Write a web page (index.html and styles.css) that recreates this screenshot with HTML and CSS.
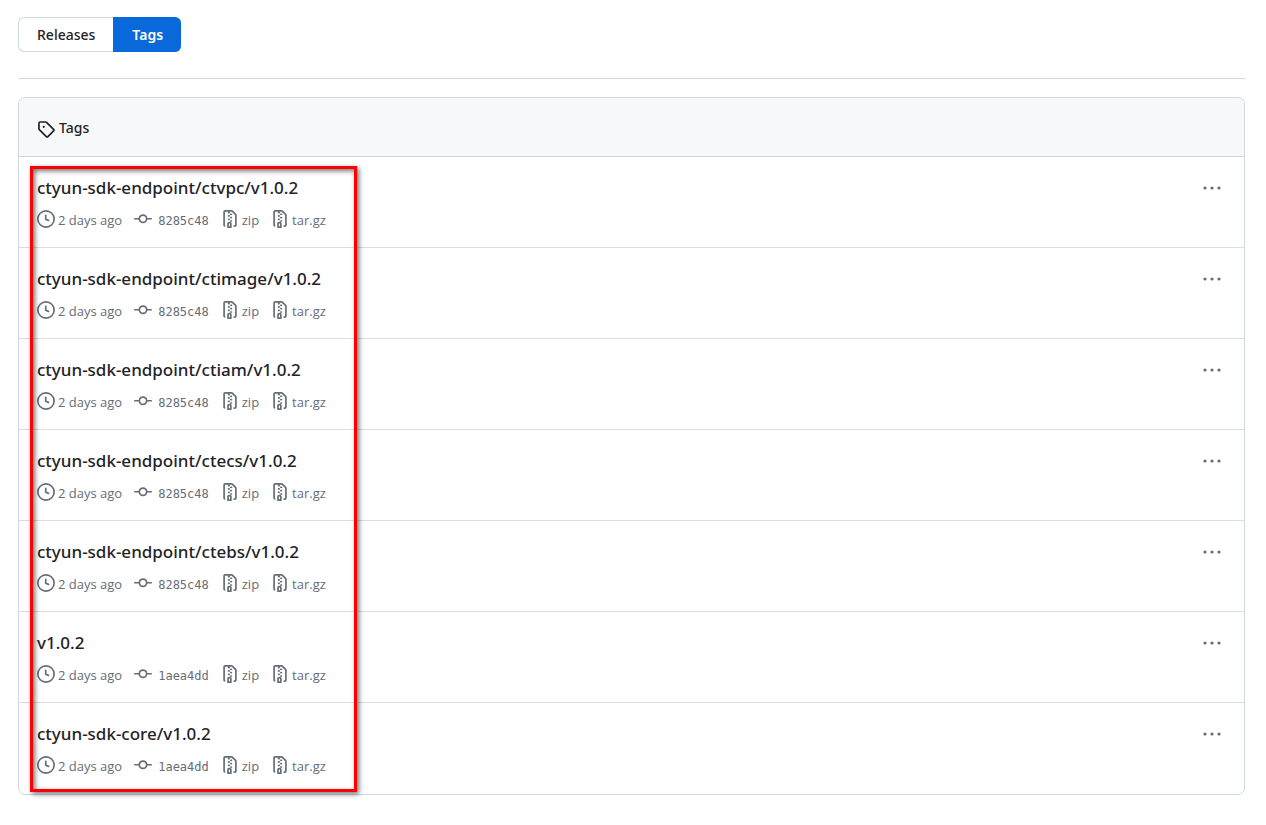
FILE: index.html
```html
<!DOCTYPE html>
<html lang="en">
<head>
  <meta charset="UTF-8" />
  <meta name="viewport" content="width=device-width, initial-scale=1.0"/>
  <title>Tags</title>
  <link rel="stylesheet" href="styles.css">
</head>
<body>
  <!-- Icon sprite -->
  <svg class="sprite" aria-hidden="true">
    <symbol id="icon-tag" viewBox="0 0 16 16">
      <path d="M1 7.775V2.75C1 1.784 1.784 1 2.75 1h5.025c.464 0 .91.184 1.238.513l6.25 6.25a1.75 1.75 0 0 1 0 2.474l-5.026 5.026a1.75 1.75 0 0 1-2.474 0l-6.25-6.25A1.752 1.752 0 0 1 1 7.775Zm1.5 0c0 .066.026.13.073.177l6.25 6.25a.25.25 0 0 0 .354 0l5.025-5.025a.25.25 0 0 0 0-.354l-6.25-6.25a.25.25 0 0 0-.177-.073H2.75a.25.25 0 0 0-.25.25ZM6 5a1 1 0 1 1 0 2 1 1 0 0 1 0-2Z"/>
    </symbol>
    <symbol id="icon-clock" viewBox="0 0 16 16">
      <path d="M8 0a8 8 0 1 1 0 16A8 8 0 0 1 8 0ZM1.5 8a6.5 6.5 0 1 0 13 0 6.5 6.5 0 0 0-13 0Zm7-3.25v2.992l2.028.812a.75.75 0 0 1-.557 1.392l-2.5-1A.751.751 0 0 1 7 8.25v-3.5a.75.75 0 0 1 1.5 0Z"/>
    </symbol>
    <symbol id="icon-commit" viewBox="0 0 16 16">
      <path d="M11.93 8.5a4.002 4.002 0 0 1-7.86 0H.75a.75.75 0 0 1 0-1.5h3.32a4.002 4.002 0 0 1 7.86 0h3.32a.75.75 0 0 1 0 1.5Zm-1.43-.75a2.5 2.5 0 1 0-5 0 2.5 2.5 0 0 0 5 0Z"/>
    </symbol>
    <symbol id="icon-zip" viewBox="0 0 16 16">
      <path d="M3.5 1.75v11.5c0 .09.048.173.126.217a.75.75 0 0 1-.752 1.298A1.748 1.748 0 0 1 2 13.25V1.75C2 .784 2.784 0 3.75 0h5.586c.464 0 .909.185 1.237.513l2.914 2.914c.329.328.513.773.513 1.237v8.586A1.75 1.75 0 0 1 12.25 15h-.5a.75.75 0 0 1 0-1.5h.5a.25.25 0 0 0 .25-.25V4.664a.25.25 0 0 0-.073-.177L9.513 1.573a.25.25 0 0 0-.177-.073H7.25a.75.75 0 0 1 0 1.5h-.5a.75.75 0 0 1 0-1.5h-3a.25.25 0 0 0-.25.25Zm3.75 8.75h.5c.966 0 1.75.784 1.75 1.75v3a.75.75 0 0 1-.75.75h-2.5a.75.75 0 0 1-.75-.75v-3c0-.966.784-1.75 1.75-1.75ZM6 5.25a.75.75 0 0 1 .75-.75h.5a.75.75 0 0 1 0 1.5h-.5A.75.75 0 0 1 6 5.25Zm.75 2.25h.5a.75.75 0 0 1 0 1.5h-.5a.75.75 0 0 1 0-1.5ZM8 6.75A.75.75 0 0 1 8.75 6h.5a.75.75 0 0 1 0 1.5h-.5A.75.75 0 0 1 8 6.75ZM8.75 3h.5a.75.75 0 0 1 0 1.5h-.5a.75.75 0 0 1 0-1.5ZM8 9.75A.75.75 0 0 1 8.75 9h.5a.75.75 0 0 1 0 1.5h-.5A.75.75 0 0 1 8 9.75Zm-1 2.5v2.25h1v-2.25a.25.25 0 0 0-.25-.25h-.5a.25.25 0 0 0-.25.25Z"/>
    </symbol>
    <symbol id="icon-dots" viewBox="0 0 18 18">
      <circle cx="2" cy="9" r="1.6"/>
      <circle cx="9" cy="9" r="1.6"/>
      <circle cx="16" cy="9" r="1.6"/>
    </symbol>
  </svg>

  <nav class="subnav">
    <a class="subnav-item" href="#releases">Releases</a>
    <a class="subnav-item selected" href="#tags" aria-current="page">Tags</a>
  </nav>

  <main class="box" id="tags">
    <h2 class="box-header"><svg class="icon"><use href="#icon-tag"/></svg>Tags</h2>
    <ul class="tag-list" id="tag-list"></ul>
    <div class="highlight"></div>
  </main>

  <script src="tags.js"></script>
</body>
</html>
```
FILE: styles.css
```css
* {
  box-sizing: border-box;
}

body {
  margin: 0;
  padding: 17px 21px 18px 18px;
  background: #fff;
  color: #1f2328;
  font-family: "Segoe UI", "Noto Sans", "Open Sans", sans-serif;
  font-size: 14px;
}

a {
  color: inherit;
  text-decoration: none;
}

.sprite {
  display: none;
}

.icon {
  width: 18px;
  height: 18px;
  flex: none;
  fill: currentColor;
}

/* Releases / Tags switch */
.subnav {
  display: flex;
  padding-bottom: 26px;
  margin-bottom: 18px;
  border-bottom: 1px solid #d0d7de;
}

.subnav-item {
  padding: 0 18px;
  border: 1px solid #d0d7de;
  border-right: 0;
  border-radius: 6px 0 0 6px;
  line-height: 33px;
  font-weight: 500;
}

.subnav-item.selected {
  border-color: #0969da;
  border-radius: 0 6px 6px 0;
  background: #0969da;
  color: #fff;
  font-weight: 600;
}

/* Tag list */
.box {
  position: relative;
  border: 1px solid #d0d7de;
  border-radius: 7px;
}

.box-header {
  display: flex;
  align-items: flex-end;
  gap: 4px;
  margin: 0;
  padding: 18px 18px 16px;
  border-bottom: 1px solid #d0d7de;
  border-radius: 6px 6px 0 0;
  background: #f6f8fa;
  font-size: 14px;
  font-weight: 500;
  line-height: 24px;
}

.box-header .icon {
  margin-bottom: 2px;
}

.tag-list {
  margin: 0;
  padding: 0;
  list-style: none;
}

.tag-row {
  display: flex;
  justify-content: space-between;
  align-items: flex-start;
  min-height: 91px;
  padding: 18px 23px 14px 18px;
  border-bottom: 1px solid #d8dee4;
}

.tag-row:last-child {
  border-bottom: 0;
}

.tag-name {
  margin: 0 0 9px;
  font-size: 17px;
  font-weight: 500;
  line-height: 26px;
}

.tag-meta {
  display: flex;
  gap: 12px;
  color: #656d76;
  font-family: "Segoe UI", "Open Sans", sans-serif;
  font-size: 13px;
  line-height: 20px;
}

.meta-item {
  display: flex;
  gap: 3px;
}

.sha {
  gap: 6px;
  font-family: "DejaVu Sans Mono", monospace;
  font-size: 12px;
  line-height: 22px;
}

.menu-button {
  display: flex;
  padding: 4px 0;
  border: 0;
  background: none;
  color: #656d76;
  cursor: pointer;
}

/* Red frame over the tag names */
.highlight {
  position: absolute;
  top: 68px;
  bottom: 2px;
  left: 11px;
  width: 327px;
  border: 3px solid #f00;
  box-shadow: 2px 2px 5px rgba(0,0,0,0.55), inset 2px 2px 5px rgba(0,0,0,0.55);
  pointer-events: none;
}
```
FILE: tags.js
```js
const tags = [
  { name: "ctyun-sdk-endpoint/ctvpc/v1.0.2", sha: "8285c48" },
  { name: "ctyun-sdk-endpoint/ctimage/v1.0.2", sha: "8285c48" },
  { name: "ctyun-sdk-endpoint/ctiam/v1.0.2", sha: "8285c48" },
  { name: "ctyun-sdk-endpoint/ctecs/v1.0.2", sha: "8285c48" },
  { name: "ctyun-sdk-endpoint/ctebs/v1.0.2", sha: "8285c48" },
  { name: "v1.0.2", sha: "1aea4dd" },
  { name: "ctyun-sdk-core/v1.0.2", sha: "1aea4dd" }
];

const icon = name => `<svg class="icon" aria-hidden="true"><use href="#icon-${name}"/></svg>`;

document.getElementById("tag-list").innerHTML = tags.map(tag => `
  <li class="tag-row">
    <div>
      <h3 class="tag-name"><a href="#${tag.name}">${tag.name}</a></h3>
      <div class="tag-meta">
        <span class="meta-item">${icon("clock")}<span>2 days ago</span></span>
        <a class="meta-item sha" href="#${tag.sha}">${icon("commit")}<span>${tag.sha}</span></a>
        <a class="meta-item" href="#zip">${icon("zip")}<span>zip</span></a>
        <a class="meta-item" href="#tar">${icon("zip")}<span>tar.gz</span></a>
      </div>
    </div>
    <button class="menu-button" type="button" aria-label="More options">${icon("dots")}</button>
  </li>`).join("");
```
